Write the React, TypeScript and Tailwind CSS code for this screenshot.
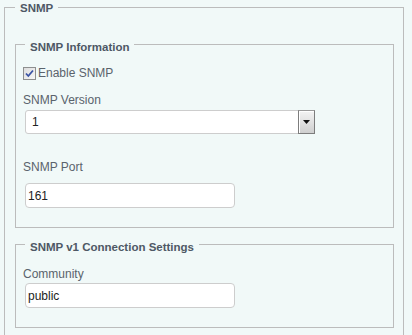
import React from 'react';

const font = { fontFamily: '"Liberation Sans", Arial, sans-serif' };

const CheckBox: React.FC = () => (
  <svg width="13" height="13" viewBox="0 0 13 13" className="shrink-0">
    <defs>
      <linearGradient id="cbg" x1="0" y1="0" x2="1" y2="1">
        <stop offset="0" stopColor="#dcdcdc" />
        <stop offset="1" stopColor="#f8f8f8" />
      </linearGradient>
    </defs>
    <rect x="0.5" y="0.5" width="12" height="12" fill="url(#cbg)" stroke="#8e8f8f" />
    <path d="M3 6.5 L5.3 9 L10 3.5" fill="none" stroke="#3a53a4" strokeWidth="1.8" />
  </svg>
);

const Legend: React.FC<{ children: React.ReactNode; outer?: boolean }> = ({ children, outer }) =>
  outer ? (
    <legend className="px-[5px] pt-[2px] text-[11.5px] leading-[12px] font-bold text-[#4e5865]">{children}</legend>
  ) : (
    <legend className="ml-[2px] px-[5px] pt-[6px] text-[11.5px] leading-[14px] font-bold text-[#4e5865]">{children}</legend>
  );

const Label: React.FC<{ children: React.ReactNode; className?: string }> = ({ children, className }) => (
  <div className={`text-[12px] leading-[14px] text-[#5a636c] ${className ?? ''}`}>{children}</div>
);

const TextBox: React.FC<{ value: string; className?: string }> = ({ value, className }) => (
  <div
    className={`ml-[2px] w-[210px] h-[25px] flex items-center px-[2px] bg-white border border-[#cdcdcd] rounded-[4px] text-[12px] text-[#222] ${className ?? ''}`}
  >
    {value}
  </div>
);

export default function App() {
  return (
    <div className="min-h-screen bg-[#f1f9f8] pl-[4px]" style={font}>
      <fieldset className="w-[400px] border border-[#bcbcbc] pl-[10px] pr-[9px] pt-[20px] pb-[20px]">
        <Legend outer>SNMP</Legend>

        <fieldset className="w-[379px] border border-[#bcbcbc] pl-[7px] pt-[11px] pb-[19px]">
          <Legend>SNMP Information</Legend>
          <div className="h-[16px] flex items-center gap-[2px] text-[12px] text-[#5a636c]">
            <CheckBox />
            <span>Enable SNMP</span>
          </div>

          <Label className="mt-[12px]">SNMP Version</Label>
          <div className="ml-[2px] mt-[3px] w-[290px] h-[24px] flex items-stretch bg-white border border-[#cdcdcd] rounded-[3px]">
            <div className="flex-1 flex items-center pl-[6px] text-[12px] text-[#222]">1</div>
            <div className="w-[17px] my-[-1px] mr-[-1px] flex items-center justify-center border border-[#7d7d7d] border-t-[#9a9a9a] bg-gradient-to-b from-[#f4f4f4] to-[#cfcfcf] shadow-[inset_1px_1px_0_#ffffff]">
              <svg width="7" height="4" viewBox="0 0 7 4">
                <path d="M0 0 H7 L3.5 4 Z" fill="#111" />
              </svg>
            </div>
          </div>

          <Label className="mt-[26px]">SNMP Port</Label>
          <TextBox value="161" className="mt-[9px]" />
        </fieldset>

        <fieldset className="mt-[6px] w-[379px] border border-[#bcbcbc] pl-[7px] pt-[13px] pb-[19px]">
          <Legend>SNMP v1 Connection Settings</Legend>
          <Label>Community</Label>
          <TextBox value="public" className="mt-[2px]" />
        </fieldset>
      </fieldset>
    </div>
  );
}
